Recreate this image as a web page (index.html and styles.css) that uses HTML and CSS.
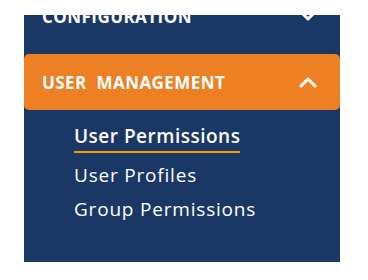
FILE: index.html
```html
<!DOCTYPE html>
<html lang="en">
<head>
  <meta charset="UTF-8" />
  <title>Sidebar</title>
  <link rel="stylesheet" href="styles.css">
</head>
<body>
  <aside class="sidebar">
    <div class="group-head">
      <span>CONFIGURATION</span>
      <svg class="chevron" width="20" height="12" viewBox="0 0 20 12"><polyline points="3,2 10,9 17,2" /></svg>
    </div>
    <div class="group-head active">
      <span>USER&nbsp; MANAGEMENT</span>
      <svg class="chevron" width="20" height="12" viewBox="0 0 20 12"><polyline points="3,10 10,3 17,10" /></svg>
    </div>
    <ul class="sub-menu">
      <li><a href="#" class="current">User Permissions</a></li>
      <li><a href="#">User Profiles</a></li>
      <li><a href="#">Group Permissions</a></li>
    </ul>
  </aside>
</body>
</html>
```

FILE: styles.css
```css
* { margin: 0; padding: 0; box-sizing: border-box; }
body {
  background: #fff;
  font-family: 'Open Sans', 'DejaVu Sans', sans-serif;
  color: #fff;
}

/* Sidebar panel */
.sidebar {
  margin: 15px 0 0 24px;
  width: 316px;
  height: 247px;
  background: #1b3766;
  overflow: hidden;
}

/* Group headers */
.group-head {
  display: flex;
  align-items: center;
  justify-content: space-between;
  height: 56px;
  padding: 0 22px 0 18px;
  font-size: 17px;
  font-weight: 700;
  letter-spacing: 0.45px;
}
.group-head:first-child { margin-top: -27px; margin-bottom: 10px; }
.group-head.active {
  background: #ee7f22;
  border-radius: 5px;
}
.chevron polyline {
  fill: none;
  stroke: #fff;
  stroke-width: 3;
  stroke-linecap: round;
  stroke-linejoin: round;
}

/* Sub menu */
.sub-menu {
  list-style: none;
  padding: 14px 0 0 50px;
}
.sub-menu li { margin-bottom: 10px; }
.sub-menu a {
  display: inline-block;
  font-size: 19px;
  line-height: 24px;
  letter-spacing: 0.8px;
  color: #fff;
  text-decoration: none;
}
.sub-menu a.current {
  font-weight: 600;
  letter-spacing: 0.5px;
  padding-bottom: 3px;
  border-bottom: 2px solid #f5a000;
}
```
